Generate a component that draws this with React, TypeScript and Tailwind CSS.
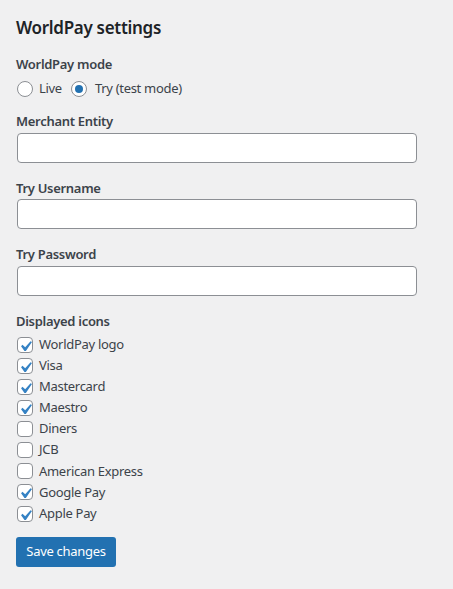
import React from "react";

const font = { fontFamily: '"Noto Sans", "Open Sans", sans-serif' };

function Radio({ checked }: { checked?: boolean }) {
  return (
    <span className="w-4 h-4 rounded-full border border-[#8c8f94] bg-white flex items-center justify-center shrink-0">
      {checked && <span className="w-2 h-2 rounded-full bg-[#2271b1]" />}
    </span>
  );
}

function Check({ checked }: { checked?: boolean }) {
  return (
    <span className="relative w-4 h-4 rounded-[4px] border border-[#8c8f94] bg-white shrink-0">
      {checked && (
        <svg viewBox="0 0 20 20" className="absolute -left-[3px] -top-[2px] w-[21px] h-[21px]">
          <path d="M14.83 4.89l1.34.94-5.81 8.38H9.02L5.78 9.67l1.34-1.25 2.57 2.4z" fill="#3582c4" />
        </svg>
      )}
    </span>
  );
}

function Field({ label }: { label: string }) {
  return (
    <div className="mt-[15px]">
      <div className="text-[13px] leading-[20px] font-semibold text-[#3c434a]">{label}</div>
      <input className="mt-[1.5px] block w-[400px] h-[30px] ml-[1px] bg-white border border-[#8c8f94] rounded-[4px] outline-none" />
    </div>
  );
}

const icons: [string, boolean][] = [
  ["WorldPay logo", true],
  ["Visa", true],
  ["Mastercard", true],
  ["Maestro", true],
  ["Diners", false],
  ["JCB", false],
  ["American Express", false],
  ["Google Pay", true],
  ["Apple Pay", true],
];

export default function App() {
  return (
    <div className="min-h-screen bg-[#f0f0f1] pl-4 pt-[16px] tracking-[-0.3px]" style={font}>
      <h2 className="text-[17px] leading-[24px] font-semibold text-[#1d2327]">WorldPay settings</h2>

      <div className="mt-[14px] text-[13px] leading-[20px] font-semibold text-[#3c434a]">WorldPay mode</div>
      <div className="mt-[5px] flex items-center h-[20px] text-[13px] text-[#3c434a] pl-[1px]">
        <Radio />
        <span className="ml-[6px]">Live</span>
        <span className="ml-[9px]" />
        <Radio checked />
        <span className="ml-[8px]">Try (test mode)</span>
      </div>

      <div className="mt-[-3px]">
        <Field label="Merchant Entity" />
        <Field label="Try Username" />
        <Field label="Try Password" />
      </div>

      <div className="mt-[15px] text-[13px] leading-[20px] font-semibold text-[#3c434a]">Displayed icons</div>
      <div className="mt-[3.5px] flex flex-col">
        {icons.map(([name, on]) => (
          <div key={name} className="h-[21.125px] flex items-center pl-[1px] text-[13px] text-[#3c434a]">
            <Check checked={on} />
            <span className="ml-[6px]">{name}</span>
          </div>
        ))}
      </div>

      <button className="mt-[13px] w-[100px] h-[30px] rounded-[3px] bg-[#2271b1] text-white text-[13px]">
        Save changes
      </button>
    </div>
  );
}
